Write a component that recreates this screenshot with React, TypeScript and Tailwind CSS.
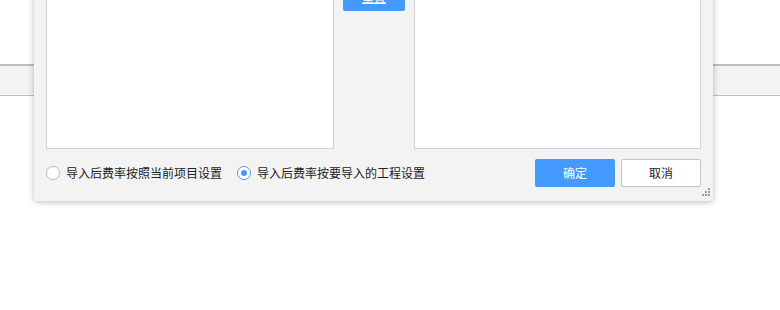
import React from "react";

const font = { fontFamily: '"Noto Sans CJK SC", "Microsoft YaHei", sans-serif' };

export default function App() {
  return (
    <div className="relative w-[780px] h-[310px] bg-white overflow-hidden" style={font}>
      <div className="mt-[64px] h-[32px] border-t-2 border-b border-[#bdbdbd] bg-[#f3f3f3]" />

      <div className="absolute left-[34px] top-[-40px] w-[679px] rounded-[4px] bg-[#f3f3f3] shadow-[0_1px_6px_rgba(0,0,0,0.28)] px-[12px] pt-[10px] pb-[14px] flex flex-col">
        <div className="flex h-[179px] gap-[9px]">
          <div className="w-[288px] h-full bg-white border border-[#d3d3d3]" />
          <div className="w-[62px] pt-[13px]">
            <button className="w-[62px] h-[28px] rounded-[2px] bg-[#4499ff] text-white text-[12px] underline leading-none">
              重置
            </button>
          </div>
          <div className="w-[287px] h-full bg-white border border-[#d3d3d3]" />
        </div>
        <div className="mt-[10px] h-[28px] flex items-center">
          <label className="flex items-center text-[12px] text-[#222]">
            <span className="w-[14px] h-[14px] rounded-full border border-[#bbbbbb] bg-white" />
            <span className="ml-[6px]">导入后费率按照当前项目设置</span>
          </label>
          <label className="ml-[15px] flex items-center text-[12px] text-[#222]">
            <span className="w-[14px] h-[14px] rounded-full border border-[#4499ff] bg-white flex items-center justify-center">
              <span className="w-[6px] h-[6px] rounded-full bg-[#4499ff]" />
            </span>
            <span className="ml-[6px]">导入后费率按要导入的工程设置</span>
          </label>
          <div className="ml-auto flex gap-[6px]">
            <button className="w-[80px] h-[28px] rounded-[2px] bg-[#4499ff] text-white text-[12px]">确定</button>
            <button className="w-[80px] h-[28px] rounded-[2px] bg-white border border-[#c4c4c4] text-[#222] text-[12px]">取消</button>
          </div>
        </div>
        <svg className="absolute right-[3px] bottom-[5px]" width="8" height="8" viewBox="0 0 8 8">
          <rect x="6" y="0" width="2" height="2" fill="#9a9a9a" />
          <rect x="3" y="3" width="2" height="2" fill="#9a9a9a" />
          <rect x="6" y="3" width="2" height="2" fill="#9a9a9a" />
          <rect x="0" y="6" width="2" height="2" fill="#9a9a9a" />
          <rect x="3" y="6" width="2" height="2" fill="#9a9a9a" />
          <rect x="6" y="6" width="2" height="2" fill="#9a9a9a" />
        </svg>
      </div>
    </div>
  );
}
